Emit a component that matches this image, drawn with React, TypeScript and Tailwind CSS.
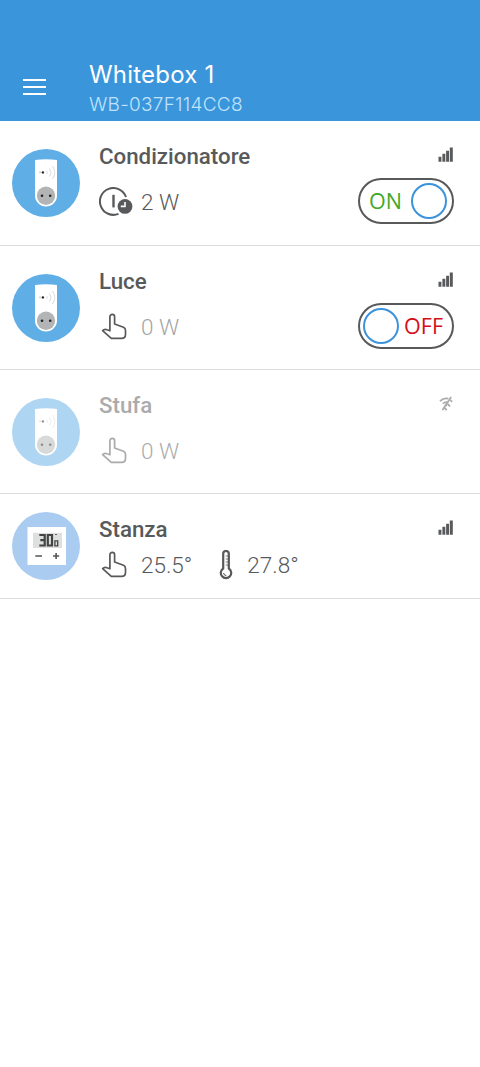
import React from 'react';
import classNames from 'clsx';

type Device = {
    name: string;
    kind: 'plug' | 'thermostat';
    mode: 'timer' | 'manual';
    value: string;
    measured?: string;
    on?: boolean;
    idle?: boolean;
    offline?: boolean;
};

const devices: Device[] = [
    { name: 'Condizionatore', kind: 'plug', mode: 'timer', value: '2 W', on: true },
    { name: 'Luce', kind: 'plug', mode: 'manual', value: '0 W', on: false, idle: true },
    { name: 'Stufa', kind: 'plug', mode: 'manual', value: '0 W', offline: true },
    { name: 'Stanza', kind: 'thermostat', mode: 'manual', value: '25.5°', measured: '27.8°' },
];

const PlugIcon = () => (
    <svg viewBox="0 0 68 68" className="size-[68px]">
        <circle cx="34" cy="34" r="34" fill="#5faee6" />
        <path d="M23 11Q34 9.6 45 11V46.5a11 11 0 0 1-22 0Z" fill="#fff" />
        <circle cx="34" cy="46.7" r="9.2" fill="#b2b4b5" />
        <circle cx="30" cy="46.7" r="1.3" fill="#222" />
        <circle cx="38.2" cy="46.7" r="1.3" fill="#222" />
        <circle cx="30.9" cy="23.4" r="1.2" fill="#222" />
        <path d="M28 22.5v1.8" stroke="#aaa" strokeWidth=".9" />
        <path d="M34.8 22q1 1.5 0 3M37.5 19.5q3 4 0 8M40.5 17q4.5 6.5 0 13" fill="none" stroke="#d5d7d8" strokeWidth=".9" />
    </svg>
);

const ThermostatIcon = () => (
    <svg viewBox="0 0 68 68" className="size-[68px]">
        <circle cx="34" cy="34" r="34" fill="#aaccf1" />
        <rect x="15.5" y="15" width="38.5" height="38" fill="#fff" />
        <rect x="21" y="20.8" width="29" height="15.2" fill="#dedfdf" />
        {/* Seven segment digits */}
        <g fill="none" stroke="#444" strokeWidth="2.2">
            <path d="M27.3 23H32.7V33.5H27.3M28.3 28.2H32" />
            <path d="M35.8 23H40V33.5H35.8Z" />
            <path d="M42.9 28.8H45.7V33.8H42.9Z" strokeWidth="1.3" />
            <path d="M43.2 22.5H44.8" strokeWidth="1.2" />
        </g>
        <path d="M23.3 44H30M41 44H47.2M44.1 41V47" stroke="#555" strokeWidth="1.6" />
    </svg>
);

const TimerIcon = () => (
    <svg viewBox="0 0 34 30" className="h-[30px] w-[34px]" fill="none">
        <path d="M27 10A13.4 13.4 0 1 0 19.5 26.8" stroke="#58595b" strokeWidth="2" />
        <path d="M14.5 7.8V20.4" stroke="#58595b" strokeWidth="2.4" />
        <circle cx="26" cy="19.4" r="7.4" fill="#58595b" />
        <path d="M26 14.9V19.4H21.8" stroke="#fff" strokeWidth="1.6" />
    </svg>
);

const HandIcon = () => (
    <svg viewBox="0 0 28 30" className="h-[30px] w-[28px]" fill="none" stroke="#58595b" strokeWidth="1.7" strokeLinecap="round" strokeLinejoin="round">
        <path d="M10.9 18V4.7A2.3 2.3 0 0 1 15.6 4.7V12L24.5 15.3Q26.5 16.2 26.5 18.5V22.5Q26.5 26.4 22.7 26.4H12.3L3.6 18.7Q5.5 16.8 8 17.8L10.9 18.8Z" />
    </svg>
);

const ThermometerIcon = () => (
    <svg viewBox="0 0 14 30" className="h-[30px] w-[14px]" fill="none" stroke="#58595b">
        <path d="M4.2 18.5V3.8A2.8 2.8 0 0 1 9.8 3.8V18.5A5.2 5.2 0 1 1 4.2 18.5Z" strokeWidth="2.2" />
        <path d="M6.7 6H9M6.7 9H9M6.7 12H9M6.7 15H9" strokeWidth=".8" />
        <path d="M4.5 23Q5 25.3 7.3 25.6" strokeWidth="1.1" />
    </svg>
);

const SignalIcon = () => (
    <svg viewBox="0 0 16 15" className="h-[15px] w-4" fill="#58595b">
        <path d="M.5 9.8h2.9V14.7H.5zM4.4 6.8h2.9v7.9H4.4zM8.1 3.8H11v10.9H8.1zM11.8.6h3V14.7h-3z" />
    </svg>
);

const NoSignalIcon = () => (
    <svg viewBox="0 0 16 15" className="h-[15px] w-4" fill="none" stroke="#58595b" strokeWidth="1.8">
        <path d="M2 5.2Q5.5 1.8 10.3 2.6M4.8 7.7Q6.7 6 9 6.2M7.2 10Q8 9.1 9 9.3" />
        <path d="M13.1 1L4.5 14M12.4 4.2L14.1 5.9M9.7 8L12 10.3M6.5 11.8L8.7 14" />
    </svg>
);

const Toggle = ({ on }: { on: boolean }) => (
    <button
        className={classNames(
            'flex h-[46px] w-24 items-center justify-between rounded-full border-2 border-[#58595b] font-["Open_Sans",sans-serif] text-[21.5px]',
            on ? 'pr-[5px] pl-[9px] text-[#43a829]' : 'flex-row-reverse pr-[9px] pl-[3px] text-[#d40d19]'
        )}
    >
        <span className="leading-none">{on ? 'ON' : 'OFF'}</span>
        <span className="size-9 rounded-full border-2 border-[#3b93dc]"></span>
    </button>
);

const DeviceRow = ({ device }: { device: Device }) => {
    const isPlug = device.kind === 'plug';

    return (
        <li className={classNames('border-b-[1.5px] border-[#dedede]', isPlug ? 'h-[124.4px]' : 'h-[105px]')}>
            <div className={classNames('flex h-full pr-[26px] pl-3', device.offline && 'opacity-50')}>
                <div className={isPlug ? 'pt-[28px]' : 'pt-[18px]'}>
                    {isPlug ? <PlugIcon /> : <ThermostatIcon />}
                </div>

                <div className="flex-1 pt-[21px] pl-[19px]">
                    <h2 className="text-[22.3px] leading-7 font-medium text-[#58595b]">{device.name}</h2>
                    <div className={classNames('flex h-[30px] items-center', isPlug ? 'mt-[17px]' : 'mt-[7px]')}>
                        <div className="w-[42px]">
                            {device.mode === 'timer' ? <TimerIcon /> : <HandIcon />}
                        </div>
                        <span className={classNames('text-[22.5px] leading-7 font-light text-[#58595b]', device.idle && 'opacity-55')}>
                            {device.value}
                        </span>
                        {device.measured && (
                            <div className="ml-[27px] flex items-center gap-[14px]">
                                <ThermometerIcon />
                                <span className="text-[22.5px] leading-7 font-light text-[#58595b]">{device.measured}</span>
                            </div>
                        )}
                    </div>
                </div>

                <div className="flex flex-col items-end gap-4 pt-[26px]">
                    {device.offline ? <NoSignalIcon /> : <SignalIcon />}
                    {device.on !== undefined && <Toggle on={device.on} />}
                </div>
            </div>
        </li>
    );
};

const App = () => {
    return (
        <div className="min-h-screen bg-white font-[Roboto,sans-serif]">
            <header className="flex h-[121.2px] bg-[#3b95db] pt-[60px] pl-[23px] font-[Inter,sans-serif]">
                <button className="mt-[18.5px] flex h-4 w-[23px] flex-col justify-between" aria-label="Menu">
                    <span className="h-0.5 w-full bg-white"></span>
                    <span className="h-0.5 w-full bg-white"></span>
                    <span className="h-0.5 w-full bg-white"></span>
                </button>
                <div className="ml-[43px]">
                    <h1 className="text-2xl leading-[29px] tracking-[0.2px] text-white">Whitebox 1</h1>
                    <p className="text-[19px] leading-8 font-light tracking-[0.25px] text-[#bfe3fb]">WB-037F114CC8</p>
                </div>
            </header>

            <ul>
                {devices.map((device) => (
                    <DeviceRow key={device.name} device={device} />
                ))}
            </ul>
        </div>
    );
};

export default App;
